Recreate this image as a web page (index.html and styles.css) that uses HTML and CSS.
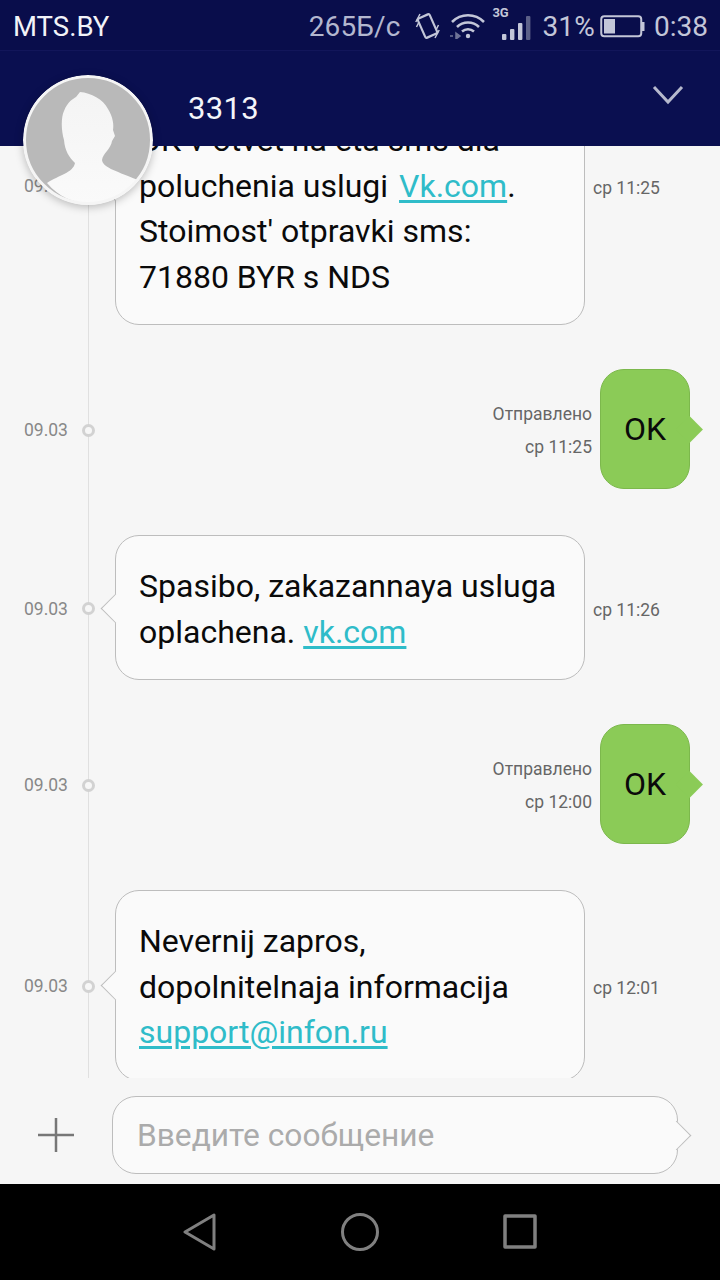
FILE: index.html
```html
<!DOCTYPE html>
<html lang="ru">
<head>
<meta charset="utf-8">
<title>3313</title>
<link rel="stylesheet" href="styles.css">
</head>
<body>
<div class="phone">
  <header class="status">
    <span class="carrier">MTS.BY</span>
    <div class="status-right">
      <span class="speed">265Б/с</span>
      <svg class="ic-vib" width="25" height="26" viewBox="0 0 25 26" fill="none" stroke="#c3c6d8">
        <rect x="6" y="2.5" width="13" height="21" rx="1.5" transform="rotate(-24 12.5 13)" stroke-width="2.2"/>
        <path d="M0.8 9 L5 1 M1.5 14 L3.5 10 M20 25 L24.2 17 M21.5 16 L23.5 12" stroke-width="1.5"/>
      </svg>
      <svg class="ic-wifi" width="36" height="26" viewBox="0 0 36 26" fill="none" stroke="#c3c6d8" stroke-width="2.6">
        <path d="M2 9 C11 0 25 0 34 9"/>
        <path d="M7 14 C13 8 23 8 29 14"/>
        <path d="M12 18.5 C15.5 15.5 20.5 15.5 24 18.5"/>
        <circle cx="18" cy="23" r="2.2" fill="#c3c6d8" stroke="none"/>
        <path d="M0 23 L3 23 M6 20 L10 23 L6 26 Z" stroke="#6f7397" stroke-width="1.5" fill="#6f7397"/>
      </svg>
      <div class="net">
        <span class="net-label">3G</span>
        <svg class="ic-bars" width="30" height="26" viewBox="0 0 30 26">
          <rect x="1" y="19" width="4.4" height="6" rx="1" fill="#c3c6d8"/>
          <rect x="9" y="14" width="4.4" height="11" rx="1" fill="#c3c6d8"/>
          <rect x="17" y="8" width="4.4" height="17" rx="1" fill="#c3c6d8"/>
          <rect x="25" y="1" width="4.4" height="24" rx="1" fill="#5c6088"/>
        </svg>
      </div>
      <span class="pct">31%</span>
      <svg class="ic-batt" width="45" height="24" viewBox="0 0 45 24" fill="none">
        <rect x="1.25" y="2.25" width="40" height="20" rx="3" stroke="#c3c6d8" stroke-width="2"/>
        <rect x="4" y="5" width="11" height="14.5" fill="#c3c6d8"/>
        <rect x="42" y="8" width="2.5" height="9" fill="#c3c6d8"/>
      </svg>
      <span class="clock">0:38</span>
    </div>
  </header>

  <div class="titlebar">
    <h1 class="title">3313</h1>
    <svg class="chevron" width="32" height="20" viewBox="0 0 32 20" fill="none" stroke="#b6b9cd" stroke-width="3">
      <path d="M2 2 L16 17 L30 2"/>
    </svg>
  </div>

  <svg class="avatar" width="130" height="130" viewBox="0 0 130 130">
    <defs>
      <linearGradient id="fade" x1="0" y1="0" x2="0" y2="1">
        <stop offset="0" stop-color="#f4f4f4"/>
        <stop offset="1" stop-color="#fafafa"/>
      </linearGradient>
    </defs>
    <circle cx="65" cy="65" r="64" fill="#b9b9b9"/>
    <path d="M57 17 C68 18 80 24 85 34 C90 42 91 50 90 55 L92 61 L89 66 C88 74 80 78 79 85 C80 92 90 95 115 105 C104 120 84 128 65 128 C50 128 36 122 24 108 C36 100 50 98 52 88 C46 82 42 76 41 65 C38 55 38 42 41 36 C45 26 50 24 53 22 Z" fill="url(#fade)"/>
    <circle cx="65" cy="65" r="63.5" fill="none" stroke="#f5f5f5" stroke-width="3"/>
  </svg>

  <main class="list">
    <div class="list-inner">
      <section class="row row-first">
        <span class="date">09.03</span>
        <span class="dot"></span>
        <div class="bubble">OK v otvet na eta sms dla<br>poluchenia uslugi <a class="link link-gap">Vk.com</a>.<br>Stoimost' otpravki sms:<br>71880 BYR s NDS</div>
        <span class="time">ср 11:25</span>
      </section>
      <section class="row row-sent">
        <span class="date">09.03</span>
        <span class="dot"></span>
        <div class="meta"><span>Отправлено</span><span>ср 11:25</span></div>
        <div class="out">OK</div>
      </section>
      <section class="row">
        <span class="date">09.03</span>
        <span class="dot"></span>
        <div class="bubble">Spasibo, zakazannaya usluga<br>oplachena. <a class="link">vk.com</a></div>
        <span class="time">ср 11:26</span>
      </section>
      <section class="row row-sent">
        <span class="date">09.03</span>
        <span class="dot"></span>
        <div class="meta"><span>Отправлено</span><span>ср 12:00</span></div>
        <div class="out">OK</div>
      </section>
      <section class="row">
        <span class="date">09.03</span>
        <span class="dot"></span>
        <div class="bubble">Nevernij zapros,<br>dopolnitelnaja informacija<br><a class="link">support@infon.ru</a></div>
        <span class="time">ср 12:01</span>
      </section>
    </div>
  </main>

  <div class="composer">
    <svg class="plus" width="36" height="36" viewBox="0 0 36 36" stroke="#777" stroke-width="2.5">
      <path d="M0 18 H36 M18 1 V35"/>
    </svg>
    <div class="input">Введите сообщение</div>
  </div>

  <nav class="nav">
    <svg width="34" height="38" viewBox="0 0 34 38" fill="none" stroke="#808080" stroke-width="3" stroke-linejoin="round">
      <path d="M31 2 V36 L2 19 Z"/>
    </svg>
    <svg width="40" height="40" viewBox="0 0 40 40" fill="none" stroke="#808080" stroke-width="3">
      <circle cx="20" cy="20" r="17.5"/>
    </svg>
    <svg width="34" height="36" viewBox="0 0 34 36" fill="none" stroke="#808080" stroke-width="3.5" stroke-linejoin="round">
      <rect x="2" y="2" width="30" height="31"/>
    </svg>
  </nav>
</div>
</body>
</html>
```
FILE: styles.css
```css
* { box-sizing: border-box; }
html, body { margin: 0; padding: 0; }
body { font-family: Roboto, "Noto Sans", sans-serif; background: #f6f6f6; }

.phone {
  position: relative;
  width: 720px;
  height: 1280px;
  display: flex;
  flex-direction: column;
  overflow: hidden;
}

/* status bar */
.status {
  height: 51px;
  flex: none;
  display: flex;
  align-items: center;
  justify-content: space-between;
  padding: 3px 12px 0 13px;
  background: #090d4b;
  border-bottom: 1px solid #12165a;
}
.carrier { font-size: 27.5px; color: #f2f3f8; }
.status-right { display: flex; align-items: center; color: #c3c6d8; font-size: 28px; }
.speed { margin-right: 15px; letter-spacing: 0.1px; color: #b3b7cf; }
.ic-vib { margin-right: 10px; margin-top: -2px; }
.ic-wifi { margin-right: 5px; margin-top: -2px; }
.net { position: relative; width: 40px; height: 30px; margin-right: 11px; margin-top: -2px; }
.net-label {
  position: absolute;
  left: 1px;
  top: -6px;
  font-size: 13px;
  font-weight: 700;
  color: #c3c6d8;
}
.ic-bars { position: absolute; right: 0; top: 4px; }
.pct { margin-right: 5px; letter-spacing: 0.2px; }
.ic-batt { margin-right: 9px; margin-top: -2px; }

/* title bar */
.titlebar {
  height: 95px;
  flex: none;
  display: flex;
  align-items: flex-start;
  justify-content: space-between;
  padding: 38px 36px 0 188px;
  background: #0a0f50;
}
.title { margin: 0; font-size: 31px; font-weight: 400; line-height: 40px; color: #f4f5fa; letter-spacing: 0.3px; }
.chevron { margin-top: -4px; }

.avatar {
  position: absolute;
  left: 23px;
  top: 75px;
  z-index: 3;
  border-radius: 50%;
  box-shadow: 0 2px 8px rgba(0, 0, 0, 0.25);
}

/* conversation */
.list { flex: 1; min-height: 0; overflow: hidden; background: #f6f6f6; }
.list-inner { margin-top: -79px; }

.row {
  position: relative;
  display: flex;
  align-items: center;
  padding: 22px 0;
}
.row::before {
  content: "";
  position: absolute;
  left: 88px;
  top: 0;
  bottom: 0;
  width: 1px;
  background: #e0e0e0;
}
.row-sent { padding-bottom: 24px; }

.date { width: 58px; margin-left: 24px; margin-top: 2px; font-size: 17.5px; color: #888; flex: none; }
.dot {
  position: relative;
  width: 13px;
  height: 13px;
  flex: none;
  margin-top: 2px;
  border: 3px solid #d2d2d2;
  border-radius: 50%;
  background: #f7f7f7;
}
.row-first .date, .row-first .dot, .row-first .time { margin-bottom: 44px; }

.bubble {
  position: relative;
  width: 470px;
  flex: none;
  margin-left: 20px;
  padding: 28px 23px 24px;
  font-size: 32px;
  line-height: 45.5px;
  color: #0a0a0a;
  background: #fafafa;
  border: 1px solid #bdbdbd;
  border-radius: 24px;
}
.bubble::before {
  content: "";
  position: absolute;
  left: -11px;
  top: 50%;
  width: 20px;
  height: 20px;
  margin-top: -10px;
  background: #fafafa;
  border-left: 1px solid #bdbdbd;
  border-bottom: 1px solid #bdbdbd;
  transform: rotate(45deg);
}
.row-first .bubble::before { top: 41%; }
.link { color: #2fbcc9; text-decoration: underline; text-underline-offset: 3px; }
.link-gap { margin-left: 3px; }
.time { margin-left: 8px; margin-top: 5px; font-size: 17.5px; color: #666; white-space: nowrap; }

.meta {
  margin-left: auto;
  margin-right: 8px;
  margin-top: 4px;
  display: flex;
  flex-direction: column;
  align-items: flex-end;
  font-size: 17.5px;
  line-height: 33px;
  color: #666;
}
.out {
  position: relative;
  flex: none;
  width: 90px;
  height: 120px;
  margin-right: 30px;
  display: flex;
  align-items: center;
  justify-content: center;
  font-size: 32px;
  color: #0a0a0a;
  background: #8bcb57;
  border: 1px solid #7cb84c;
  border-radius: 24px;
}
.out::after {
  content: "";
  position: absolute;
  right: -10px;
  top: 50%;
  width: 19px;
  height: 19px;
  margin-top: -9.5px;
  background: #8bcb57;
  transform: rotate(45deg);
}

/* composer */
.composer {
  height: 106px;
  flex: none;
  display: flex;
  align-items: center;
  padding: 8px 0 0 38px;
  background: #f6f6f6;
}
.plus { flex: none; }
.input {
  position: relative;
  width: 566px;
  height: 78px;
  margin-left: 38px;
  padding-left: 24px;
  display: flex;
  align-items: center;
  font-size: 31.7px;
  color: #ababab;
  background: #fafafa;
  border: 1px solid #bdbdbd;
  border-radius: 24px;
}
.input::after {
  content: "";
  position: absolute;
  right: -10px;
  top: 50%;
  width: 20px;
  height: 20px;
  margin-top: -10px;
  background: #fafafa;
  border-top: 1px solid #bdbdbd;
  border-right: 1px solid #bdbdbd;
  transform: rotate(45deg);
}

/* navigation */
.nav {
  height: 96px;
  flex: none;
  display: flex;
  align-items: center;
  gap: 123px;
  padding-left: 183px;
  background: #000;
}
```
